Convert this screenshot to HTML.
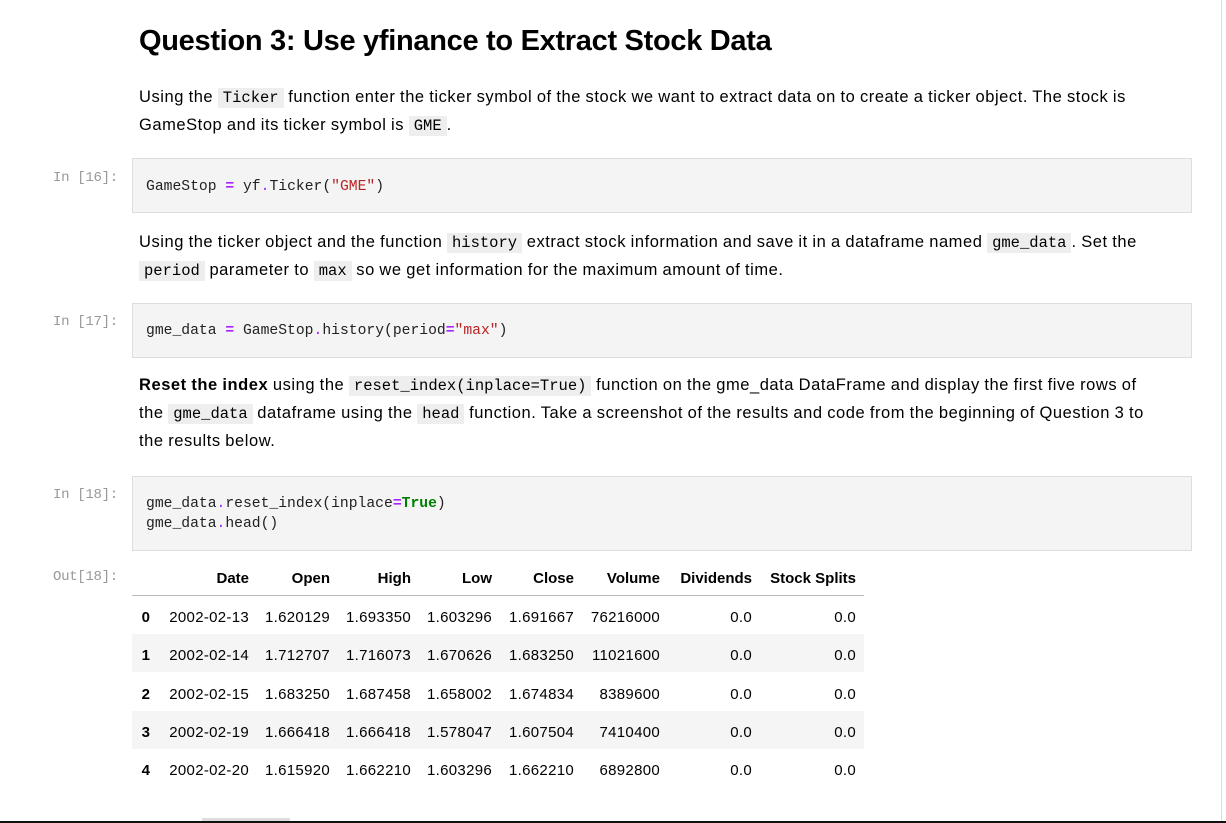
<!DOCTYPE html>
<html><head><meta charset="utf-8"><style>
body{margin:0;width:1226px;height:823px;background:#fff;position:relative;overflow:hidden;font-family:"Liberation Sans",sans-serif;color:#000}
.a{position:absolute;white-space:nowrap}
h1{position:absolute;left:139px;top:25px;margin:0;font-size:29px;font-weight:bold;color:#000;letter-spacing:-0.3px}
.p{position:absolute;left:139px;font-size:16.5px;color:#000;white-space:nowrap;letter-spacing:0.55px;word-spacing:-0.5px;line-height:28px}
code{font-family:"Liberation Mono",monospace;background:#eee;padding:1px 5px;font-size:15.5px;letter-spacing:0;word-spacing:0}
.prompt{position:absolute;left:53px;font-family:"Liberation Mono",monospace;font-size:14px;color:#999;letter-spacing:-0.3px}
.cell{position:absolute;left:132px;width:1058px;background:#f4f4f4;border:1px solid #ddd}
.code{position:absolute;left:146px;font-family:"Liberation Mono",monospace;font-size:14.7px;color:#212121;line-height:20px;white-space:pre}
.o{color:#aa22ff;font-weight:bold}.s{color:#ba2121}.k{color:#008000;font-weight:bold}.d{color:#aa22ff}
.t{position:absolute;font-size:15px;text-align:right;white-space:nowrap;letter-spacing:0.3px}
.h{font-weight:bold;letter-spacing:0}
</style></head><body>
<div class="a" style="left:1221px;top:0;width:1px;height:823px;background:#ddd"></div>
<h1>Question 3: Use yfinance to Extract Stock Data</h1>
<div class="p" style="top:83px">Using the <code>Ticker</code> function enter the ticker symbol of the stock we want to extract data on to create a ticker object. The stock is</div>
<div class="p" style="top:111px">GameStop and its ticker symbol is <code>GME</code>.</div>

<div class="prompt" style="top:170px">In [16]:</div>
<div class="cell" style="top:158px;height:53px"></div>
<div class="code" style="top:177px">GameStop <span class="o">=</span> yf<span class="d">.</span>Ticker(<span class="s">"GME"</span>)</div>

<div class="p" style="top:228px">Using the ticker object and the function <code>history</code> extract stock information and save it in a dataframe named <code>gme_data</code>. Set the</div>
<div class="p" style="top:256px"><code>period</code> parameter to <code>max</code> so we get information for the maximum amount of time.</div>

<div class="prompt" style="top:314px">In [17]:</div>
<div class="cell" style="top:303px;height:53px"></div>
<div class="code" style="top:321px">gme_data <span class="o">=</span> GameStop<span class="d">.</span>history(period<span class="o">=</span><span class="s">"max"</span>)</div>

<div class="p" style="top:371px"><b>Reset the index</b> using the <code>reset_index(inplace=True)</code> function on the gme_data DataFrame and display the first five rows of</div>
<div class="p" style="top:399px">the <code>gme_data</code> dataframe using the <code>head</code> function. Take a screenshot of the results and code from the beginning of Question 3 to</div>
<div class="p" style="top:427px">the results below.</div>

<div class="prompt" style="top:487px">In [18]:</div>
<div class="cell" style="top:476px;height:73px"></div>
<div class="code" style="top:494px">gme_data<span class="d">.</span>reset_index(inplace<span class="o">=</span><span class="k">True</span>)
gme_data<span class="d">.</span>head()</div>

<div class="prompt" style="top:569px">Out[18]:</div>
<div class="a" style="left:132px;top:595px;width:732px;height:1px;background:#bbb"></div>
<div class="a" style="left:132px;top:634px;width:732px;height:38px;background:#f5f5f5"></div>
<div class="a" style="left:132px;top:711px;width:732px;height:38px;background:#f5f5f5"></div>

<div id="tbl"></div>
<script>
var rights=[150,249,330,411,492,574,660,752,856];
var head=["","Date","Open","High","Low","Close","Volume","Dividends","Stock Splits"];
var rows=[["0","2002-02-13","1.620129","1.693350","1.603296","1.691667","76216000","0.0","0.0"],
["1","2002-02-14","1.712707","1.716073","1.670626","1.683250","11021600","0.0","0.0"],
["2","2002-02-15","1.683250","1.687458","1.658002","1.674834","8389600","0.0","0.0"],
["3","2002-02-19","1.666418","1.666418","1.578047","1.607504","7410400","0.0","0.0"],
["4","2002-02-20","1.615920","1.662210","1.603296","1.662210","6892800","0.0","0.0"]];
var h="";
function cell(txt,r,top,b){h+='<div class="t'+(b?' h':'')+'" style="right:'+(1226-r)+'px;top:'+top+'px">'+txt+'</div>';}
head.forEach(function(t,i){if(t)cell(t,rights[i],570,true);});
rows.forEach(function(row,j){row.forEach(function(t,i){cell(t,rights[i],609+j*38.3,i==0);});});
document.getElementById("tbl").innerHTML=h;
</script>
<div class="a" style="left:202px;top:818px;width:88px;height:3px;background:#ddd"></div>
<div class="a" style="left:0;top:821px;width:1226px;height:2px;background:#111"></div>
</body></html>
